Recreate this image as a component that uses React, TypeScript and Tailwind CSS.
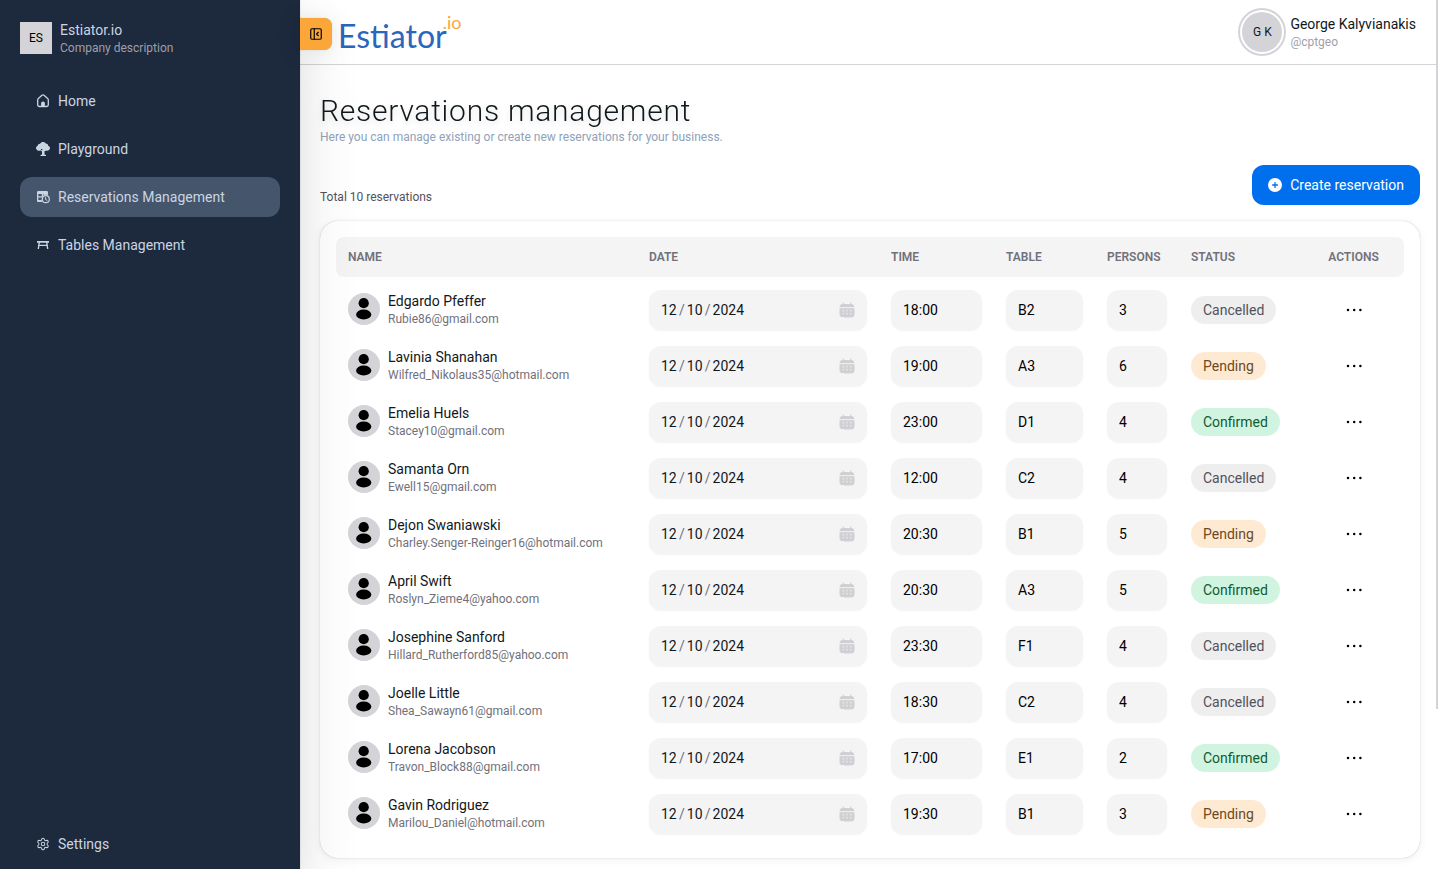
import type { ReactNode } from "react";
import { PanelLeftClose, Settings } from "lucide-react";
import { FaCirclePlus } from "react-icons/fa6";

type Status = "Cancelled" | "Pending" | "Confirmed";

interface Reservation {
  name: string;
  email: string;
  time: string;
  table: string;
  persons: string;
  status: Status;
}

const reservations: Reservation[] = [
  { name: "Edgardo Pfeffer", email: "Rubie86@gmail.com", time: "18:00", table: "B2", persons: "3", status: "Cancelled" },
  { name: "Lavinia Shanahan", email: "Wilfred_Nikolaus35@hotmail.com", time: "19:00", table: "A3", persons: "6", status: "Pending" },
  { name: "Emelia Huels", email: "Stacey10@gmail.com", time: "23:00", table: "D1", persons: "4", status: "Confirmed" },
  { name: "Samanta Orn", email: "Ewell15@gmail.com", time: "12:00", table: "C2", persons: "4", status: "Cancelled" },
  { name: "Dejon Swaniawski", email: "Charley.Senger-Reinger16@hotmail.com", time: "20:30", table: "B1", persons: "5", status: "Pending" },
  { name: "April Swift", email: "Roslyn_Zieme4@yahoo.com", time: "20:30", table: "A3", persons: "5", status: "Confirmed" },
  { name: "Josephine Sanford", email: "Hillard_Rutherford85@yahoo.com", time: "23:30", table: "F1", persons: "4", status: "Cancelled" },
  { name: "Joelle Little", email: "Shea_Sawayn61@gmail.com", time: "18:30", table: "C2", persons: "4", status: "Cancelled" },
  { name: "Lorena Jacobson", email: "Travon_Block88@gmail.com", time: "17:00", table: "E1", persons: "2", status: "Confirmed" },
  { name: "Gavin Rodriguez", email: "Marilou_Daniel@hotmail.com", time: "19:30", table: "B1", persons: "3", status: "Pending" },
];

const statusStyles: Record<Status, string> = {
  Cancelled: "bg-[#eeeeef] text-[#52525b]",
  Pending: "bg-[#feead3] text-[#6b4a1c]",
  Confirmed: "bg-[#d1f4e0] text-[#0e5c33]",
};

function HomeIcon() {
  return (
    <svg viewBox="0 0 14 14" className="size-3.5" fill="none" stroke="currentColor" strokeLinejoin="round" aria-hidden="true">
      <path d="M1.7 6.1c0-.8.3-1.3.9-1.8L6 1.3c.6-.5 1.400-.5 2 0l3.400 3c.6.5.9 1 .9 1.800v4.700c0 1-.7 1.700-1.700 1.700H3.400c-1 0-1.700-.7-1.700-1.700z" strokeWidth="1.300" />
      <path d="M5.100 12.500V9.400c0-1.200.8-1.900 1.900-1.900s1.900.7 1.900 1.900v3.100z" fill="currentColor" stroke="none" />
    </svg>
  );
}

function TreeIcon() {
  return (
    <svg viewBox="0 0 14 14" className="size-3.5" fill="currentColor" aria-hidden="true">
      <path d="M4.100 1.700C4.700.6 5.800 0 7 0s2.300.6 2.900 1.600c1.200 0 2.200.9 2.300 2.100C13.300 4.100 14 5 14 6.100c0 1.500-1.200 2.600-2.700 2.600-.5 0-.9-.1-1.300-.3-.4.4-.9.7-1.500.8v3.200l1.500.6v1H4.500v-1L6 12.400V9.600L4.400 8.500l.5-.7L6.300 8.600V7H5.300L4 8.700H2.600C1.200 8.700 0 7.600 0 6.100c0-1.100.7-2 1.700-2.400.1-1.100 1.100-2 2.400-2z" />
    </svg>
  );
}

function TableClockIcon() {
  return (
    <svg viewBox="0 0 14 14" className="size-3.5" aria-hidden="true">
      <path
        fill="currentColor"
        fillRule="evenodd"
        d="M2.300 1h8.400c.7 0 1.300.6 1.300 1.300v2.900c-.6-.3-1.300-.5-2-.5-.9 0-1.800.3-2.500.8V4H7v2c-.5.500-.8 1-1 1.600H2.300V10h3.300c.1.800.4 1.500.8 2.100H2.300C1.600 12.100 1 11.500 1 10.800V2.300C1 1.600 1.600 1 2.300 1zM2.300 4v2.200h3.500V4z"
      />
      <circle cx="9.800" cy="9.200" r="3.500" fill="none" stroke="currentColor" strokeWidth="1.200" />
      <path d="M9.600 7.200v2.300l1.700 1" fill="none" stroke="currentColor" strokeWidth="1" />
    </svg>
  );
}

function BenchIcon() {
  return (
    <svg viewBox="0 0 14 14" className="size-3.5" fill="currentColor" aria-hidden="true">
      <path d="M1 3h12v1.700h-1.500l.9 6.400H11L10.600 8H3.400L3 11.100H1.600l.9-6.400H1zm2.900 1.700-.3 2.100h6.800l-.3-2.100z" />
    </svg>
  );
}

function CalendarIcon() {
  return (
    <svg viewBox="0 0 24 24" className="size-[18px]" fill="currentColor" aria-hidden="true">
      <path d="M7.750 2.500a.75.75 0 0 0-1.500 0v1.580c-1.440.115-2.384.397-3.078 1.092-.695.694-.977 1.639-1.093 3.078h19.842c-.116-1.440-.398-2.384-1.093-3.078-.694-.695-1.639-.977-3.078-1.093V2.500a.75.75 0 0 0-1.500 0v1.513C15.585 4 14.839 4 14 4h-4c-.839 0-1.585 0-2.250.013z" />
      <path fillRule="evenodd" d="M2 12c0-.839 0-1.585.013-2.250h19.974C22 10.415 22 11.161 22 12v2c0 3.771 0 5.657-1.172 6.828S17.771 22 14 22h-4c-3.771 0-5.657 0-6.828-1.172S2 17.771 2 14zm15 2a1 1 0 1 0 0-2 1 1 0 0 0 0 2m0 4a1 1 0 1 0 0-2 1 1 0 0 0 0 2m-4-5a1 1 0 1 1-2 0 1 1 0 0 1 2 0m0 4a1 1 0 1 1-2 0 1 1 0 0 1 2 0m-6-3a1 1 0 1 0 0-2 1 1 0 0 0 0 2m0 4a1 1 0 1 0 0-2 1 1 0 0 0 0 2" />
    </svg>
  );
}

function PersonIcon() {
  return (
    <svg viewBox="0 0 32 32" className="size-8" fill="#000" aria-hidden="true">
      <circle cx="15.700" cy="10.200" r="5.100" />
      <ellipse cx="15.700" cy="21.500" rx="7.600" ry="5.100" />
    </svg>
  );
}

function NavItem({ icon, label, active = false }: { icon: ReactNode; label: string; active?: boolean }) {
  return (
    <a
      href="#"
      aria-current={active ? "page" : undefined}
      className={`flex h-10 items-center gap-2 rounded-xl px-4 text-sm text-slate-300 ${active ? "bg-slate-600" : ""}`}
    >
      {icon}
      {label}
    </a>
  );
}

function Sidebar() {
  return (
    <aside className="z-10 flex w-[300px] shrink-0 flex-col bg-slate-800 px-5 pt-5 pb-[5px] shadow-[0_0_30px_0_rgb(0_0_0/0.04),0_30px_60px_0_rgb(0_0_0/0.12),0_0_1px_0_rgb(0_0_0/0.3)]">
      <div className="flex h-9 items-center gap-2">
        <span className="flex size-8 items-center justify-center bg-zinc-300 text-xs text-black">ES</span>
        <div>
          <p className="text-sm text-slate-300">Estiator.io</p>
          <p className="text-xs text-zinc-400">Company description</p>
        </div>
      </div>
      <nav className="mt-[25px] flex grow flex-col gap-2">
        <NavItem icon={<HomeIcon />} label="Home" />
        <NavItem icon={<TreeIcon />} label="Playground" />
        <NavItem icon={<TableClockIcon />} label="Reservations Management" active />
        <NavItem icon={<BenchIcon />} label="Tables Management" />
      </nav>
      <NavItem icon={<Settings className="size-3.5" strokeWidth={1.75} aria-hidden="true" />} label="Settings" />
    </aside>
  );
}

function TopBar() {
  return (
    <header className="flex h-[65px] items-center justify-between border-b border-zinc-300 pr-5">
      <div className="flex items-center gap-1.5">
        <button
          type="button"
          aria-label="Collapse sidebar"
          className="z-20 mt-1 flex size-8 items-center justify-center rounded-r-lg bg-[#faa638] text-black shadow-[0_0_15px_0_rgb(0_0_0/0.03),0_2px_30px_0_rgb(0_0_0/0.08),0_0_1px_0_rgb(0_0_0/0.3)]"
        >
          <PanelLeftClose className="size-3.5" aria-hidden="true" />
        </button>
        <a href="#" className="flex items-start" style={{ fontFamily: "Lato, sans-serif" }}>
          <span className="mt-2 text-[32px] leading-10 text-[#2b66bd]">Estiator</span>
          <span className="-ml-1 text-lg leading-7 text-[#faa638]">.io</span>
        </a>
      </div>
      <div className="flex items-center gap-2">
        <span className="flex size-10 items-center justify-center rounded-full bg-zinc-300 text-xs ring-2 ring-zinc-300 ring-offset-2">
          G K
        </span>
        <div>
          <p className="text-sm">George Kalyvianakis</p>
          <p className="text-xs text-zinc-400">@cptgeo</p>
        </div>
      </div>
    </header>
  );
}

const boxStyles = "h-10 w-full rounded-xl bg-zinc-100 px-3 text-sm shadow-xs";

function DateField({ owner }: { owner: string }) {
  return (
    <div role="group" aria-label={`Date for ${owner}`} className={`flex items-center ${boxStyles}`}>
      <input aria-label="Month" defaultValue="12" className="mr-0.5 w-4" />
      <span className="mr-0.5 text-zinc-500">/</span>
      <input aria-label="Day" defaultValue="10" className="mr-0.5 w-4" />
      <span className="mr-0.5 text-zinc-500">/</span>
      <input aria-label="Year" defaultValue="2024" className="w-8" />
      <button type="button" aria-label="Open calendar" className="-mr-px ml-auto text-[#cfcfd4]">
        <CalendarIcon />
      </button>
    </div>
  );
}

const headCell = "px-3 text-left text-xs font-semibold";

export default function App() {
  return (
    <div className="flex min-h-screen bg-white text-[#11181c]" style={{ fontFamily: "Roboto, sans-serif" }}>
      <Sidebar />
      <div className="min-w-0 grow">
        <TopBar />
        <main className="pt-7 pr-4 pb-[11px] pl-5">
          <h1 className="text-3xl leading-9 font-light tracking-wide drop-shadow-md">Reservations management</h1>
          <p className="text-xs text-slate-400">Here you can manage existing or create new reservations for your business.</p>
          <div className="mt-5 flex h-10 items-end justify-between">
            <p className="text-xs text-zinc-600">Total 10 reservations</p>
            <button type="button" className="flex h-10 items-center gap-2 rounded-xl bg-[#006fee] px-4 text-sm text-white">
              <FaCirclePlus className="size-3.5" aria-hidden="true" />
              Create reservation
            </button>
          </div>
          <section className="mt-4 rounded-[18px] bg-white p-4 shadow-[0_0_5px_0_rgb(0_0_0/0.02),0_2px_10px_0_rgb(0_0_0/0.06),0_0_1px_0_rgb(0_0_0/0.3)]">
            <table className="w-full table-fixed border-separate border-spacing-0">
              <colgroup>
                <col />
                <col className="w-[242px]" />
                <col className="w-[115px]" />
                <col className="w-[101px]" />
                <col className="w-[84px]" />
                <col className="w-[124px]" />
                <col className="w-[101px]" />
              </colgroup>
              <thead>
                <tr className="h-10 text-zinc-500 uppercase">
                  <th className={`${headCell} rounded-l-lg bg-zinc-100`}>Name</th>
                  <th className={`${headCell} bg-zinc-100`}>Date</th>
                  <th className={`${headCell} bg-zinc-100`}>Time</th>
                  <th className={`${headCell} bg-zinc-100`}>Table</th>
                  <th className={`${headCell} bg-zinc-100`}>Persons</th>
                  <th className={`${headCell} bg-zinc-100`}>Status</th>
                  <th className="rounded-r-lg bg-zinc-100 px-3 text-center text-xs font-semibold">Actions</th>
                </tr>
              </thead>
              <tbody>
                <tr aria-hidden="true" className="h-[5px]" />
                {reservations.map((r) => (
                  <tr key={r.email} className="h-14">
                    <td className="px-3 pb-0.5">
                      <div className="flex items-center gap-2">
                        <span className="size-8 shrink-0 rounded-full bg-zinc-300">
                          <PersonIcon />
                        </span>
                        <div className="min-w-0">
                          <p className="text-sm">{r.name}</p>
                          <p className="text-xs text-zinc-500">{r.email}</p>
                        </div>
                      </div>
                    </td>
                    <td className="px-3">
                      <DateField owner={r.name} />
                    </td>
                    <td className="px-3">
                      <input aria-label={`Time for ${r.name}`} defaultValue={r.time} className={`${boxStyles} text-black`} />
                    </td>
                    <td className="px-3">
                      <input aria-label={`Table for ${r.name}`} defaultValue={r.table} className={`${boxStyles} text-black`} />
                    </td>
                    <td className="px-3">
                      <input aria-label={`Persons for ${r.name}`} defaultValue={r.persons} className={`${boxStyles} text-black`} />
                    </td>
                    <td className="px-3">
                      <span className={`inline-flex h-7 items-center rounded-full px-3 text-sm ${statusStyles[r.status]}`}>{r.status}</span>
                    </td>
                    <td className="px-3">
                      <button type="button" aria-label={`Actions for ${r.name}`} className="mx-auto block">
                        <svg viewBox="0 0 20 20" className="size-5" fill="#000" aria-hidden="true">
                          <circle cx="4" cy="10" r="1.250" />
                          <circle cx="10.200" cy="10" r="1.250" />
                          <circle cx="16.400" cy="10" r="1.250" />
                        </svg>
                      </button>
                    </td>
                  </tr>
                ))}
              </tbody>
            </table>
          </section>
        </main>
      </div>
      <div className="h-[709px] w-0.5 shrink-0 bg-zinc-300" aria-hidden="true" />
    </div>
  );
}
